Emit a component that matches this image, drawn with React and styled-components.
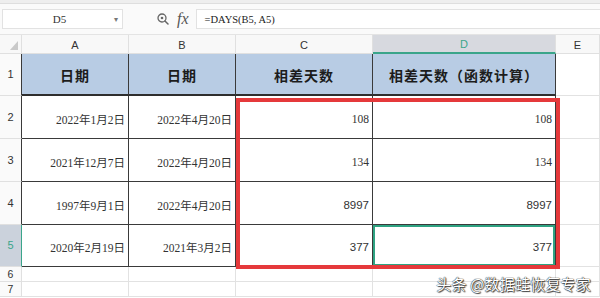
import React from 'react';
import styled, { createGlobalStyle } from 'styled-components';

// --- global page reset ---
const GlobalStyle = createGlobalStyle`
  html, body {
    margin: 0;
    padding: 0;
    background: #ffffff;
    overflow: hidden;
  }
  body {
    font-family: "Liberation Sans", "Noto Sans CJK SC", sans-serif;
  }
`;

const Page = styled.div`
  position: relative;
  width: 600px;
  height: 298px;
  overflow: hidden;
  background: #ffffff;
`;

// --- ribbon remnant + formula bar ---

const RibbonEdge = styled.div`
  height: 3px;
  background: #eeeeee;
  border-bottom: 1px solid #dedede;
`;

const FormulaBar = styled.div`
  display: flex;
  align-items: center;
  height: 31px;
  padding-left: 2px;
  background: #fafafa;
  border-bottom: 1px solid #e4e4e4;
  box-sizing: border-box;
`;

const NameBox = styled.div`
  box-sizing: border-box;
  display: flex;
  align-items: center;
  width: 121px;
  height: 20px;
  background: #ffffff;
  border: 1px solid #e2e2e2;
  font-family: "Liberation Serif", serif;
  font-size: 11px;
  color: #333;
`;

const NameText = styled.span`
  flex: 1;
  text-align: center;
  padding-left: 6px;
`;

const NameArrow = styled.span`
  width: 12px;
  font-size: 8px;
  color: #777;
  text-align: center;
`;

const FxArea = styled.div`
  display: flex;
  align-items: center;
  gap: 8px;
  margin-left: 34px;
`;

const FxLabel = styled.span`
  font-family: "Liberation Serif", serif;
  font-style: italic;
  font-size: 16px;
  color: #555;
  line-height: 1;
`;

const FormulaInput = styled.div`
  box-sizing: border-box;
  flex: 1;
  display: flex;
  align-items: center;
  height: 20px;
  margin-left: 7px;
  padding-left: 8px;
  background: #ffffff;
  border: 1px solid #e2e2e2;
  border-right: none;
  font-family: "Liberation Serif", "Noto Sans CJK SC", serif;
  font-size: 10.5px;
  color: #222;
`;

// --- sheet grid ---

const Sheet = styled.div`
  position: relative;
  display: grid;
  grid-template-columns: 22px 107px 107px 137px 183px 1fr;
  grid-template-rows: 19px 42px 43px 43px 43px 42px 15px 15px;
`;

const ColHead = styled.div`
  box-sizing: border-box;
  display: flex;
  align-items: center;
  justify-content: center;
  padding-top: 1px;
  background: ${p => (p.$active ? '#d7d9df' : '#f8f8f8')};
  border-right: 1px solid #e0e0e0;
  border-bottom: ${p => (p.$active ? '2px solid #3aa58a' : '1px solid #e0e0e0')};
  color: ${p => (p.$active ? '#3aa58a' : '#333')};
  font-size: 11px;
`;

const Corner = styled(ColHead)`
  align-items: flex-end;
  justify-content: flex-end;
  padding: 0 3px 3px 0;
`;

const RowHead = styled.div`
  box-sizing: border-box;
  display: flex;
  align-items: center;
  justify-content: center;
  background: ${p => (p.$active ? '#cbd2dc' : '#fafafa')};
  border-right: 1px solid ${p => (p.$active ? '#3aa58a' : p.$framed ? '#3a3a3a' : '#e0e0e0')};
  border-bottom: 1px solid #e0e0e0;
  color: ${p => (p.$active ? '#3aa58a' : '#333')};
  font-size: ${p => (p.$small ? '10.5px' : '11px')};
  line-height: 1;
`;

const HeadCell = styled.div`
  box-sizing: border-box;
  display: flex;
  align-items: center;
  justify-content: center;
  padding-top: 1px;
  background: #b8cce4;
  border-right: 1px solid #3a3a3a;
  border-bottom: 2px solid #2e2e2e;
  font-family: "Noto Sans CJK SC", sans-serif;
  font-weight: 700;
  font-size: 14px;
  letter-spacing: 1px;
  color: #1c1c1c;
`;

const DataCell = styled.div`
  box-sizing: border-box;
  display: flex;
  align-items: center;
  justify-content: flex-end;
  padding: 3px 3px 0 0;
  background: #ffffff;
  border-right: 1px solid #3a3a3a;
  border-bottom: 1px solid #3a3a3a;
  box-shadow: ${p => (p.$selected ? 'inset 0 0 0 2px #2fa382' : 'none')};
  font-family: ${p =>
    p.$sans
      ? '"Liberation Sans", "Noto Sans CJK SC", sans-serif'
      : '"Liberation Serif", "Noto Sans CJK SC", serif'};
  font-size: 11.5px;
  color: #333;
`;

const EmptyCell = styled.div`
  box-sizing: border-box;
  background: #ffffff;
  border-right: 1px solid #e2e2e2;
  border-bottom: 1px solid #e2e2e2;
`;

// red highlight drawn over C2:D5
const Highlight = styled.div`
  position: absolute;
  left: 236px;
  top: 63px;
  width: 324px;
  height: 171px;
  box-sizing: border-box;
  border: 4px solid #e5393b;
  pointer-events: none;
`;

const Watermark = styled.div`
  position: absolute;
  right: 9px;
  bottom: 4px;
  font-family: "Noto Sans CJK SC", sans-serif;
  font-size: 15px;
  color: #ffffff;
  text-shadow: 0 0 1px #222, 0 0 1px #222, 1px 1px 1px #444;
  letter-spacing: 0.2px;
`;

const MagnifierIcon = () => (
  <svg width="12" height="12" viewBox="0 0 12 12" fill="none">
    <circle cx="5" cy="5" r="4" stroke="#666" strokeWidth="1.3" />
    <circle cx="5" cy="5" r="1.3" fill="#666" />
    <path d="M8 8 L11 11" stroke="#666" strokeWidth="1.5" strokeLinecap="round" />
  </svg>
);

const CornerMark = () => (
  <svg width="8" height="9" viewBox="0 0 8 9">
    <polygon points="8,0 8,9 0,9" fill="#c9c9c9" />
  </svg>
);

const rows = [
  { a: '2022年1月2日', b: '2022年4月20日', c: '108', d: '108' },
  { a: '2021年12月7日', b: '2022年4月20日', c: '134', d: '134' },
  { a: '1997年9月1日', b: '2022年4月20日', c: '8997', d: '8997', sans: true },
  { a: '2020年2月19日', b: '2021年3月2日', c: '377', d: '377', sans: true },
];

const headers = ['日期', '日期', '相差天数', '相差天数（函数计算）'];

export default function App() {
  return (
    <Page>
      <GlobalStyle />
      <RibbonEdge />
      <FormulaBar>
        <NameBox>
          <NameText>D5</NameText>
          <NameArrow>▾</NameArrow>
        </NameBox>
        <FxArea>
          <MagnifierIcon />
          <FxLabel>fx</FxLabel>
        </FxArea>
        <FormulaInput>=DAYS(B5, A5)</FormulaInput>
      </FormulaBar>

      <Sheet>
        <Corner>
          <CornerMark />
        </Corner>
        {['A', 'B', 'C', 'D', 'E'].map(col => (
          <ColHead key={col} $active={col === 'D'}>{col}</ColHead>
        ))}

        <RowHead $framed>1</RowHead>
        {headers.map((h, i) => (
          <HeadCell key={i}>{h}</HeadCell>
        ))}
        <EmptyCell />

        {rows.map((r, i) => {
          const n = i + 2;
          const last = n === 5;
          return (
            <React.Fragment key={n}>
              <RowHead $framed $active={last}>{n}</RowHead>
              <DataCell>{r.a}</DataCell>
              <DataCell>{r.b}</DataCell>
              <DataCell $sans={r.sans}>{r.c}</DataCell>
              <DataCell $sans={r.sans} $selected={last}>{r.d}</DataCell>
              <EmptyCell />
            </React.Fragment>
          );
        })}

        {[6, 7].map(n => (
          <React.Fragment key={n}>
            <RowHead $small>{n}</RowHead>
            <EmptyCell />
            <EmptyCell />
            <EmptyCell />
            <EmptyCell />
            <EmptyCell />
          </React.Fragment>
        ))}

        <Highlight />
      </Sheet>

      <Watermark>头条 @数据蛙恢复专家</Watermark>
    </Page>
  );
}
